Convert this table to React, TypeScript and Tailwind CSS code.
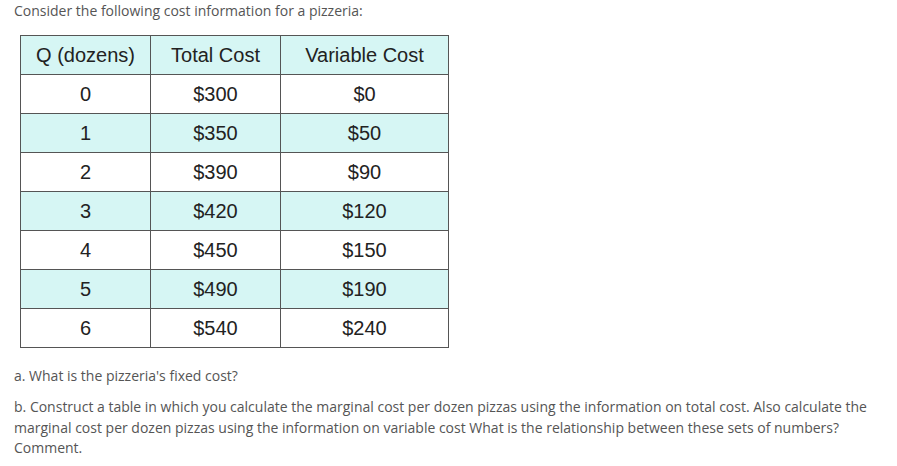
const rows = [
  ['0', '$300', '$0'],
  ['1', '$350', '$50'],
  ['2', '$390', '$90'],
  ['3', '$420', '$120'],
  ['4', '$450', '$150'],
  ['5', '$490', '$190'],
  ['6', '$540', '$240'],
]

export default function App() {
  return (
    <div className="h-[466px] w-[897px] bg-white px-[14px] pt-[1px] font-['Open_Sans',sans-serif] text-[14px] text-[#555]">
      <p className="leading-[20px]">Consider the following cost information for a pizzeria:</p>
      <table className="mt-[14px] ml-[6px] border-collapse font-['Liberation_Sans',Arial,sans-serif] text-[20px] text-[#222]">
        <thead>
          <tr className="bg-[#d6f6f4]">
            <th className="h-[39px] w-[130px] border border-[#555] font-normal">Q (dozens)</th>
            <th className="h-[39px] w-[130px] border border-[#555] font-normal">Total Cost</th>
            <th className="h-[39px] w-[168px] border border-[#555] font-normal">Variable Cost</th>
          </tr>
        </thead>
        <tbody>
          {rows.map((r, i) => (
            <tr key={r[0]} className={i % 2 === 1 ? 'bg-[#d6f6f4]' : 'bg-white'}>
              {r.map((c, j) => (
                <td key={j} className="h-[39px] border border-[#555] text-center">
                  {c}
                </td>
              ))}
            </tr>
          ))}
        </tbody>
      </table>
      <p className="mt-[18px] leading-[20px]">a. What is the pizzeria's fixed cost?</p>
      <p className="mt-[11px] leading-[20.5px]">
        b. Construct a table in which you calculate the marginal cost per dozen pizzas using the information on total cost. Also calculate the
        marginal cost per dozen pizzas using the information on variable cost What is the relationship between these sets of numbers?
        Comment.
      </p>
    </div>
  )
}
